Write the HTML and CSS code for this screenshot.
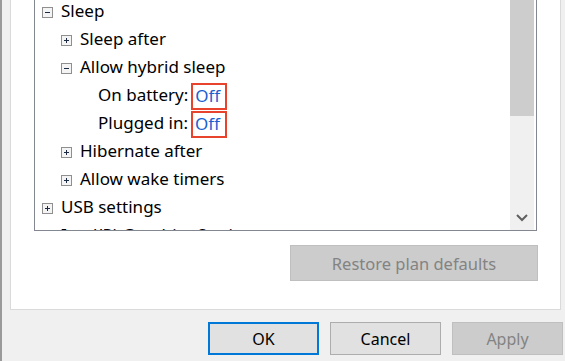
FILE: index.html
```
<!DOCTYPE html>
<html lang="en">
<head>
    <meta charset="UTF-8">
    <title>Power Options - Advanced settings</title>
    <link rel="stylesheet" href="styles.css">
</head>
<body>
    <div class="window">
        <div class="panel">
            <div class="tree">
                <ul class="tree-list">
                    <li class="node level-0">
                        <svg class="expander" width="11" height="11" viewBox="0 0 11 11"><rect x="0.5" y="0.5" width="10" height="10" fill="#f4f4f4" stroke="#8f8f8f"/><path d="M3 5.5h5" stroke="#1b2a44"/></svg>
                        <span class="label">Sleep</span>
                    </li>
                    <li class="node level-1">
                        <svg class="expander" width="11" height="11" viewBox="0 0 11 11"><rect x="0.5" y="0.5" width="10" height="10" fill="#f4f4f4" stroke="#8f8f8f"/><path d="M3 5.5h5M5.5 3v5" stroke="#1b2a44"/></svg>
                        <span class="label">Sleep after</span>
                    </li>
                    <li class="node level-1">
                        <svg class="expander" width="11" height="11" viewBox="0 0 11 11"><rect x="0.5" y="0.5" width="10" height="10" fill="#f4f4f4" stroke="#8f8f8f"/><path d="M3 5.5h5" stroke="#1b2a44"/></svg>
                        <span class="label">Allow hybrid sleep</span>
                    </li>
                    <li class="node level-2">
                        <span class="label">On battery:</span><span class="value">Off</span>
                    </li>
                    <li class="node level-2">
                        <span class="label">Plugged in:</span><span class="value">Off</span>
                    </li>
                    <li class="node level-1">
                        <svg class="expander" width="11" height="11" viewBox="0 0 11 11"><rect x="0.5" y="0.5" width="10" height="10" fill="#f4f4f4" stroke="#8f8f8f"/><path d="M3 5.5h5M5.5 3v5" stroke="#1b2a44"/></svg>
                        <span class="label">Hibernate after</span>
                    </li>
                    <li class="node level-1">
                        <svg class="expander" width="11" height="11" viewBox="0 0 11 11"><rect x="0.5" y="0.5" width="10" height="10" fill="#f4f4f4" stroke="#8f8f8f"/><path d="M3 5.5h5M5.5 3v5" stroke="#1b2a44"/></svg>
                        <span class="label">Allow wake timers</span>
                    </li>
                    <li class="node level-0">
                        <svg class="expander" width="11" height="11" viewBox="0 0 11 11"><rect x="0.5" y="0.5" width="10" height="10" fill="#f4f4f4" stroke="#8f8f8f"/><path d="M3 5.5h5M5.5 3v5" stroke="#1b2a44"/></svg>
                        <span class="label">USB settings</span>
                    </li>
                    <li class="node level-0">
                        <svg class="expander" width="11" height="11" viewBox="0 0 11 11"><rect x="0.5" y="0.5" width="10" height="10" fill="#f4f4f4" stroke="#8f8f8f"/><path d="M3 5.5h5M5.5 3v5" stroke="#1b2a44"/></svg>
                        <span class="label">Intel(R) Graphics Settings</span>
                    </li>
                </ul>
                <div class="scrollbar">
                    <div class="thumb"></div>
                    <div class="track"></div>
                    <svg class="arrow" width="24" height="17" viewBox="0 0 24 17"><path d="M7 5l5 5 5-5" fill="none" stroke="#606060" stroke-width="2"/></svg>
                </div>
            </div>
            <div class="panel-actions">
                <button class="btn btn-wide" disabled>Restore plan defaults</button>
            </div>
        </div>
        <div class="footer">
            <button class="btn btn-default">OK</button>
            <button class="btn">Cancel</button>
            <button class="btn" disabled>Apply</button>
        </div>
    </div>
</body>
</html>
```

FILE: styles.css
```
* {
    margin: 0;
    padding: 0;
    box-sizing: border-box;
}

body {
    background-color: #f0f0f0;
    font-family: 'Noto Sans', 'Open Sans', sans-serif;
    font-size: 17px;
    color: #000000;
    overflow: hidden;
}

.window {
    height: 361px;
    border-left: 2px solid #9a9a9a;
    padding-left: 8px;
}

/* White tab page */
.panel {
    width: 551px;
    height: 310px;
    background-color: #ffffff;
    border: 1px solid #dadada;
    border-top: none;
    padding-left: 23px;
}

/* Settings tree */
.tree {
    width: 503px;
    height: 231px;
    border: 1px solid #828790;
    border-top: none;
    display: flex;
    overflow: hidden;
}

.tree-list {
    flex: 1;
    list-style: none;
    margin-top: -3px;
    overflow: hidden;
}

.node {
    height: 28px;
    line-height: 28px;
    display: flex;
    align-items: center;
    white-space: nowrap;
}

.node.level-0 {
    padding-left: 7px;
}

.node.level-1 {
    padding-left: 26px;
}

.node.level-2 {
    padding-left: 63px;
}

.expander {
    flex-shrink: 0;
    margin-right: 8px;
    margin-top: 3px;
}

.value {
    align-self: flex-start;
    color: #1a5fd0;
    border: 2px solid #e8432d;
    height: 27px;
    line-height: 21px;
    margin-top: 2px;
    padding: 0 5px 0 2px;
    margin-left: 3px;
}

.scrollbar {
    width: 24px;
    margin-right: 2px;
    background-color: #f0f0f0;
    display: flex;
    flex-direction: column;
}

.thumb {
    height: 116px;
    background-color: #cdcdcd;
}

.track {
    flex: 1;
}

.arrow {
    display: block;
    margin-bottom: 3px;
}

.panel-actions {
    width: 504px;
    margin-top: 14px;
    display: flex;
    justify-content: flex-end;
}

/* Buttons */
.btn {
    font-family: inherit;
    font-size: 16px;
    height: 33px;
    width: 111px;
    background-color: #e1e1e1;
    border: 1px solid #adadad;
    color: #000000;
}

.btn:disabled {
    background-color: #cccccc;
    border-color: #bfbfbf;
    color: #838383;
}

.btn-wide {
    width: 248px;
    height: 36px;
    font-size: 16.5px;
}

.btn-default {
    border: 2px solid #0078d7;
}

.footer {
    margin-top: 12px;
    display: flex;
    justify-content: flex-end;
    gap: 11px;
    padding-right: 2px;
}
```
